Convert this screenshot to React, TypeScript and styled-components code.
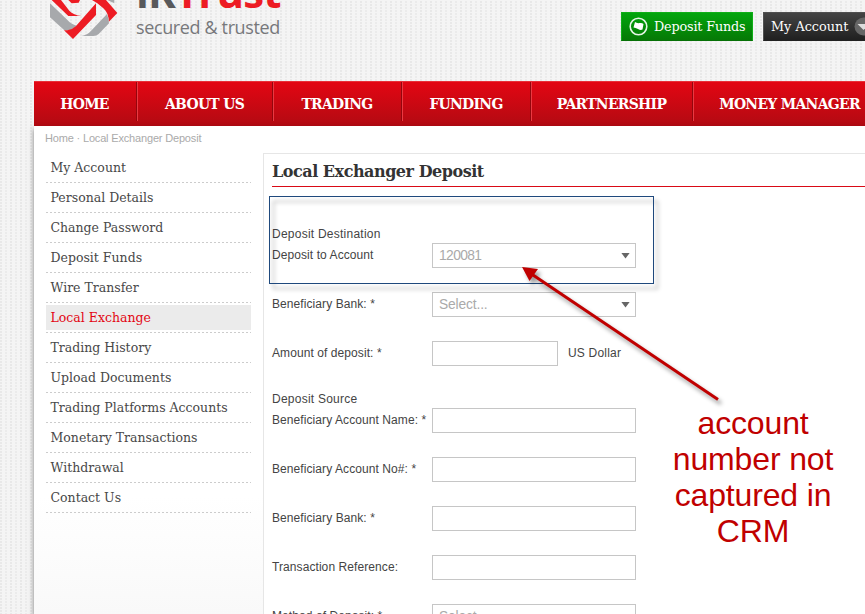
import React from "react";
import styled, { createGlobalStyle } from "styled-components";

const slab = `"DejaVu Serif", serif`;
const slabNarrow = `"DejaVu Serif Condensed", "DejaVu Serif", serif`;
const sans = `"Liberation Sans", Arial, sans-serif`;

const GlobalStyle = createGlobalStyle`
  * { box-sizing: border-box; }
  html, body { margin: 0; padding: 0; }
  body {
    width: 865px;
    height: 614px;
    overflow: hidden;
    font-family: ${sans};
    font-size: 12px;
    color: #444;
    background-color: #f4f4f4;
  }
`;

const Page = styled.div`
  position: relative;
  width: 865px;
  height: 614px;
  overflow: hidden;
  background-color: #f5f5f5;
  background-image:
    repeating-linear-gradient(180deg, #f4f4f4 0 1px, rgba(244, 244, 244, 0) 1px 3px),
    repeating-linear-gradient(90deg, #e8e8e8 0 2px, #f4f4f4 2px 5px, #ebebeb 5px 7px, #f4f4f4 7px 10px);
`;

const Header = styled.header`
  display: flex;
  height: 81px;
  padding-left: 49px;
`;

const Brand = styled.div`
  display: flex;
  flex: none;
  width: 572px;
`;

const Mark = styled.svg`
  width: 70px;
  height: 40px;
  flex: none;
`;

const BrandText = styled.div`
  margin: -34px 0 0 17px;
  white-space: nowrap;
`;

const BrandName = styled.div`
  height: 50px;
  font: 700 42px/51px "Open Sans", sans-serif;
  letter-spacing: -0.9px;
  color: #58595b;
  span { color: #ed1c24; }
`;

const Tagline = styled.div`
  font: 400 18px/22px "Open Sans", sans-serif;
  color: #77787b;
  letter-spacing: -0.37px;
`;

const Actions = styled.div`
  display: flex;
  flex: none;
  gap: 10px;
  padding-top: 12px;
`;

const Action = styled.button<{ $green?: boolean }>`
  display: flex;
  align-items: center;
  gap: 6px;
  width: ${(p) => (p.$green ? 132 : 142)}px;
  height: 29px;
  padding: 0 7px;
  border: 1px solid ${(p) => (p.$green ? "#0fae18" : "#505050")};
  border-bottom-color: ${(p) => (p.$green ? "#067006" : "#222")};
  background: ${(p) =>
    p.$green ? "linear-gradient(#02a50c, #067906)" : "linear-gradient(#444, #202020)"};
  color: #fff;
  font: 400 12.8px/20px ${slab};
  letter-spacing: ${(p) => (p.$green ? -0.17 : 0)}px;
  white-space: nowrap;
  svg { flex: none; }
`;

const Nav = styled.nav`
  display: flex;
  width: 960px;
  height: 45px;
  margin-left: 34px;
  border-top: 1px solid #e83038;
  background: linear-gradient(#e30613, #b20a12);
`;

const NavItem = styled.a<{ $w: number }>`
  flex: none;
  width: ${(p) => p.$w}px;
  height: 39px;
  padding-right: 2px;
  border-right: 1px solid #ea3a42;
  box-shadow: inset -1px 0 #94060d;
  color: #fff;
  text-align: center;
  font: 700 15.5px/43px ${slabNarrow};
  letter-spacing: -0.7px;
  white-space: nowrap;
`;

const Sheet = styled.div`
  width: 960px;
  height: 488px;
  margin-left: 34px;
  padding-top: 5px;
  background: linear-gradient(#fff 370px, #f9f9f9 488px);
  box-shadow: 0 3px 5px rgba(0, 0, 0, 0.5);
`;

const Crumbs = styled.div`
  height: 22px;
  padding-left: 11px;
  color: #aaa;
  font-size: 11px;
  line-height: 14px;
  letter-spacing: -0.17px;
`;

const Columns = styled.div`
  display: flex;
  align-items: flex-start;
`;

const Sidebar = styled.ul`
  width: 205px;
  margin: 0 12px;
  padding: 0;
  list-style: none;
`;

const SideItem = styled.li<{ $active?: boolean }>`
  height: 30px;
  padding-top: 2px;
  background: repeating-linear-gradient(90deg, #ccc 0 2px, transparent 2px 4px) 0 29px / 100% 1px no-repeat;
  a {
    display: block;
    height: 25px;
    padding-left: 4.500px;
    background: ${(p) => (p.$active ? "#ebebeb" : "transparent")};
    color: ${(p) => (p.$active ? "#e30613" : "#484848")};
    font: 400 12.5px/26px ${slab};
    white-space: nowrap;
  }
`;

const Main = styled.main`
  flex: 1;
  height: 480px;
  padding-left: 8px;
  border: 1px solid #e6e6e6;
  background: #fff;
`;

const Title = styled.h1`
  height: 33px;
  margin: 0 0 39px;
  border-bottom: 1px solid #d90a16;
  color: #333;
  font: 700 16px/35px ${slab};
  letter-spacing: -0.47px;
`;

const GroupName = styled.div`
  height: 17px;
  padding-top: 1px;
  line-height: 14px;
  letter-spacing: 0.24px;
`;

const Row = styled.div<{ $last?: boolean }>`
  display: flex;
  height: ${(p) => (p.$last ? 50 : 49)}px;
`;

const Label = styled.label`
  width: 160px;
  line-height: 24px;
  letter-spacing: 0.08px;
  white-space: nowrap;
`;

const Field = styled.div<{ $short?: boolean; $ls?: number }>`
  display: flex;
  align-items: center;
  justify-content: space-between;
  width: ${(p) => (p.$short ? 126 : 204)}px;
  height: 25px;
  padding: 0 5px 0 6px;
  border: 1px solid #c6c6c6;
  background: #fff;
  color: #aaa;
  font-size: 13.8px;
  letter-spacing: ${(p) => p.$ls ?? -0.15}px;
`;

const Caret = styled.span`
  width: 9px;
  height: 6px;
  background: #666;
  clip-path: polygon(0 0, 100% 0, 50% 100%);
`;

const Unit = styled.span`
  margin-left: 10px;
  line-height: 24px;
  letter-spacing: 0.2px;
`;

const Highlight = styled.div`
  position: absolute;
  left: 269px;
  top: 196px;
  width: 385px;
  height: 88px;
  border: 1px solid #1f497d;
  filter: drop-shadow(4px 5px 2px rgba(0, 0, 0, 0.4));
`;

const Arrow = styled.svg`
  position: absolute;
  left: 510px;
  top: 255px;
  filter: drop-shadow(3px 4px 2px rgba(0, 0, 0, 0.4));
`;

const Note = styled.div`
  position: absolute;
  left: 662px;
  top: 405px;
  width: 182px;
  color: #c00000;
  font-size: 32px;
  line-height: 36px;
  letter-spacing: -0.15px;
  text-align: center;
`;

const navItems: [string, number][] = [
  ["HOME", 104],
  ["ABOUT US", 136],
  ["TRADING", 129],
  ["FUNDING", 129],
  ["PARTNERSHIP", 162],
  ["MONEY MANAGER", 194],
];

const sideItems = [
  "My Account",
  "Personal Details",
  "Change Password",
  "Deposit Funds",
  "Wire Transfer",
  "Local Exchange",
  "Trading History",
  "Upload Documents",
  "Trading Platforms Accounts",
  "Monetary Transactions",
  "Withdrawal",
  "Contact Us",
];

export default function App() {
  return (
    <>
      <GlobalStyle />
      <Page>
        <Header>
          <Brand>
            <Mark viewBox="147 0 210 120">
              <path fill="#a7a9ac" d="M150 10 L200 58 Q214 74 230 77 L212 91 L193 91 L150 52Z" />
              <path fill="#ed1c24" d="M155 0 H183 L208 32 Q220 45 245 48 L205 48Z" />
              <path fill="#ed1c24" d="M288 10 V45 L219 117 L192 91 H202 Q217 89 228 78Z" />
              <path fill="#ed1c24" d="M205 0 H240 L236 8 L215 10Z" />
              <path fill="#ed1c24" d="M276 0 H318 L352 39 L326 66 Q327 40 310 25 L292 10Z" />
              <path fill="#a7a9ac" d="M322 0 H343 V10Z" />
              <path fill="#a7a9ac" d="M321 42 Q326 55 327 70 L296 102 Q290 108 280 108 H245 Q262 105 272 94Z" />
            </Mark>
            <BrandText>
              <BrandName>iK<span>Trust</span></BrandName>
              <Tagline>secured &amp; trusted</Tagline>
            </BrandText>
          </Brand>
          <Actions>
            <Action $green>
              <svg width="19" height="19" viewBox="0 0 19 19">
                <circle cx="9.5" cy="9.5" r="8.3" fill="none" stroke="#e6f5e6" strokeWidth="1.6" />
                <path fill="#fff" d="M6 5 Q8 6.5 10.5 6 T14.5 7 L13.5 12.5 Q11.5 13.5 9 12 T4.500 10.500Z" />
              </svg>
              Deposit Funds
            </Action>
            <Action>
              My Account
              <svg width="19" height="19" viewBox="0 0 19 19">
                <circle cx="9.5" cy="9.5" r="9" fill="#666" />
                <path fill="#ddd" d="M3.5 7 H15.5 L9.5 13Z" />
              </svg>
            </Action>
          </Actions>
        </Header>
        <Nav>
          {navItems.map(([t, w]) => (
            <NavItem key={t} $w={w}>{t}</NavItem>
          ))}
        </Nav>
        <Sheet>
          <Crumbs>Home · Local Exchanger Deposit</Crumbs>
          <Columns>
            <Sidebar>
              {sideItems.map((t) => (
                <SideItem key={t} $active={t === "Local Exchange"}><a>{t}</a></SideItem>
              ))}
            </Sidebar>
            <Main>
              <Title>Local Exchanger Deposit</Title>
              <GroupName>Deposit Destination</GroupName>
              <Row><Label>Deposit to Account</Label><Field $ls={-0.6}>120081<Caret /></Field></Row>
              <Row><Label>Beneficiary Bank: *</Label><Field>Select...<Caret /></Field></Row>
              <Row $last><Label>Amount of deposit: *</Label><Field $short /><Unit>US Dollar</Unit></Row>
              <GroupName>Deposit Source</GroupName>
              <Row><Label>Beneficiary Account Name: *</Label><Field /></Row>
              <Row><Label>Beneficiary Account No#: *</Label><Field /></Row>
              <Row><Label>Beneficiary Bank: *</Label><Field /></Row>
              <Row><Label>Transaction Reference:</Label><Field /></Row>
              <Row><Label>Method of Deposit: *</Label><Field>Select...<Caret /></Field></Row>
            </Main>
          </Columns>
        </Sheet>
        <Highlight />
        <Arrow width="220" height="155" viewBox="510 255 220 155">
          <path d="M530 273 L718 399.5" stroke="#c00000" strokeWidth="3" />
          <path d="M522 267 L538 269 L529.5 281Z" fill="#c00000" />
        </Arrow>
        <Note>account number not captured in CRM</Note>
      </Page>
    </>
  );
}
